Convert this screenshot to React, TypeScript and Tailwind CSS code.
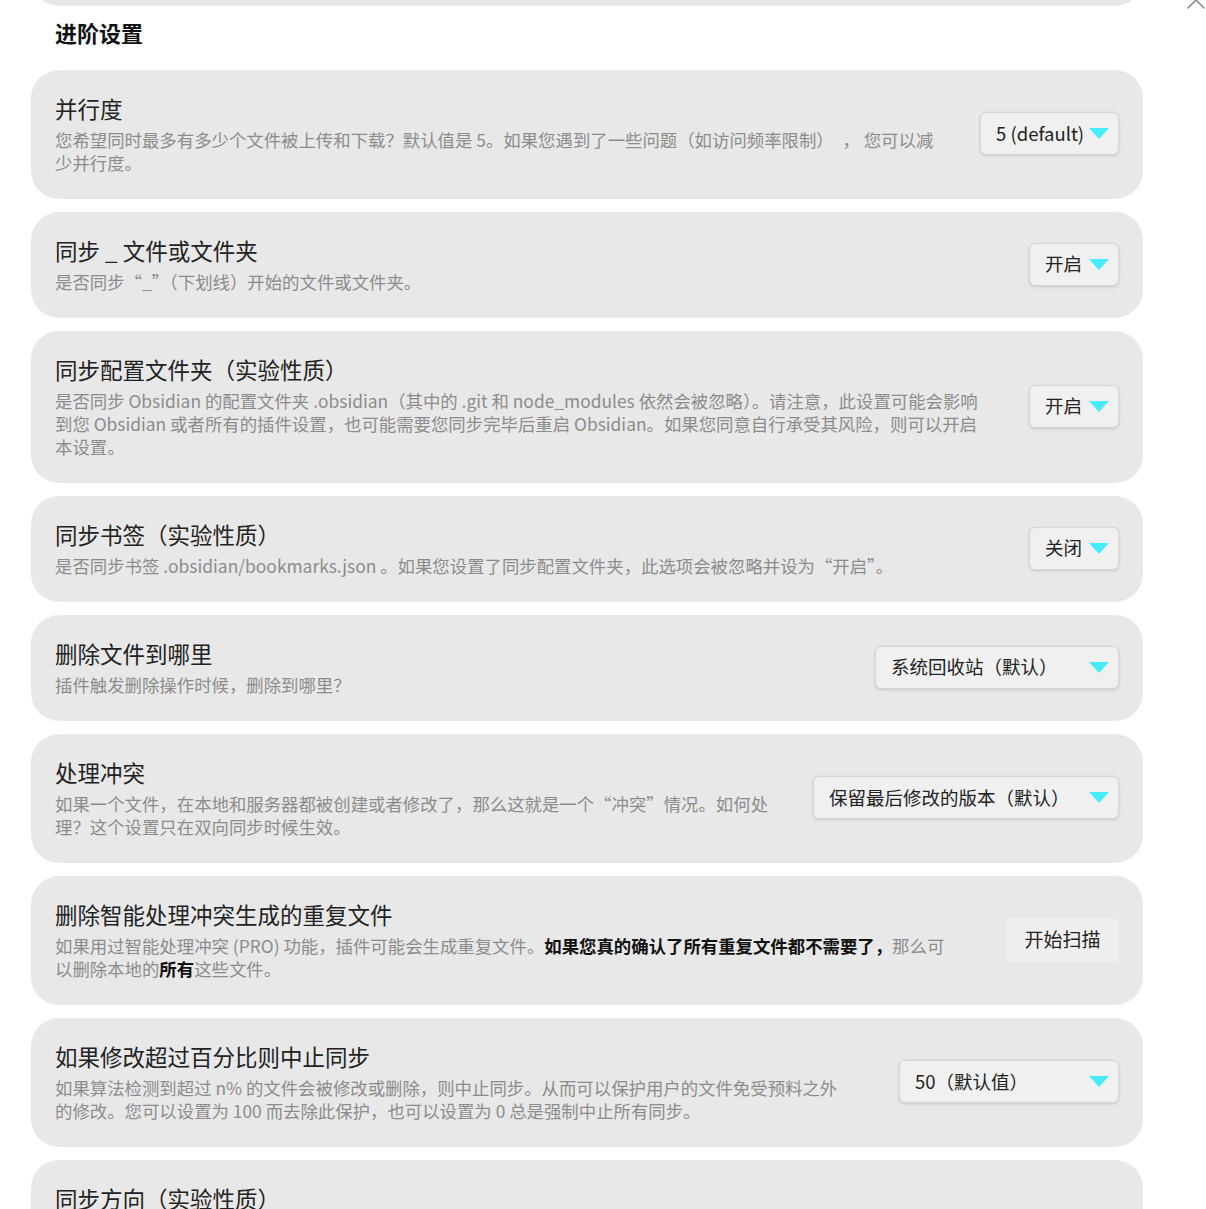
import { X } from 'lucide-react';
import type { ReactNode } from 'react';

type Control =
  | { kind: 'select'; value: string; width: string }
  | { kind: 'button'; label: string };

interface Setting {
  title: string;
  desc: ReactNode;
  control: Control;
}

const settings: Setting[] = [
  {
    title: '并行度',
    desc: (
      <>
        您希望同时最多有多少个文件被上传和下载？默认值是 5。如果您遇到了一些问题（如访问频率限制）　， 您可以减
        <br />
        少并行度。
      </>
    ),
    control: { kind: 'select', value: '5 (default)', width: 'w-[139px]' },
  },
  {
    title: '同步 _ 文件或文件夹',
    desc: '是否同步“_”（下划线）开始的文件或文件夹。',
    control: { kind: 'select', value: '开启', width: 'w-[90px]' },
  },
  {
    title: '同步配置文件夹（实验性质）',
    desc: (
      <>
        是否同步 Obsidian 的配置文件夹 .obsidian（其中的 .git 和 node_modules 依然会被忽略）。请注意，此设置可能会影响
        <br />
        到您 Obsidian 或者所有的插件设置，也可能需要您同步完毕后重启 Obsidian。如果您同意自行承受其风险，则可以开启
        <br />
        本设置。
      </>
    ),
    control: { kind: 'select', value: '开启', width: 'w-[90px]' },
  },
  {
    title: '同步书签（实验性质）',
    desc: '是否同步书签 .obsidian/bookmarks.json 。如果您设置了同步配置文件夹，此选项会被忽略并设为“开启”。',
    control: { kind: 'select', value: '关闭', width: 'w-[90px]' },
  },
  {
    title: '删除文件到哪里',
    desc: '插件触发删除操作时候，删除到哪里？',
    control: { kind: 'select', value: '系统回收站（默认）', width: 'w-[244px]' },
  },
  {
    title: '处理冲突',
    desc: (
      <>
        如果一个文件，在本地和服务器都被创建或者修改了，那么这就是一个“冲突”情况。如何处
        <br />
        理？这个设置只在双向同步时候生效。
      </>
    ),
    control: { kind: 'select', value: '保留最后修改的版本（默认）', width: 'w-[306px]' },
  },
  {
    title: '删除智能处理冲突生成的重复文件',
    desc: (
      <>
        如果用过智能处理冲突 (PRO) 功能，插件可能会生成重复文件。
        <b className="font-bold text-[#111]">如果您真的确认了所有重复文件都不需要了，</b>
        那么可
        <br />
        以删除本地的<b className="font-bold text-[#111]">所有</b>这些文件。
      </>
    ),
    control: { kind: 'button', label: '开始扫描' },
  },
  {
    title: '如果修改超过百分比则中止同步',
    desc: (
      <>
        如果算法检测到超过 n% 的文件会被修改或删除，则中止同步。从而可以保护用户的文件免受预料之外
        <br />
        的修改。您可以设置为 100 而去除此保护，也可以设置为 0 总是强制中止所有同步。
      </>
    ),
    control: { kind: 'select', value: '50（默认值）', width: 'w-[220px]' },
  },
  {
    title: '同步方向（实验性质）',
    desc: '插件应该向哪里同步？默认是双向同步，本地和远端的修改都会互相同步。如果选择增量单向同步，则只把本地新增或修改的文件推送到远端，而不会删除远端的文件；反之亦然。注意每次同步都只对修改过的文件进行操作。',
    control: { kind: 'select', value: '双向同步（默认）', width: 'w-[220px]' },
  },
];

function SelectBox({ value, width }: { value: string; width: string }) {
  return (
    <div
      className={`${width} h-[43px] shrink-0 flex items-center justify-between pl-[15px] pr-[9px] bg-[#f0f0f0] border border-[#d6d6d6] rounded-[6px] shadow-[0_1px_3px_rgba(0,0,0,0.14)] text-[18.5px] text-[#222]`}
    >
      <span className="whitespace-nowrap">{value}</span>
      <svg width="20" height="11" viewBox="0 0 20 11" className="shrink-0">
        <polygon points="0,0 20,0 10,11" fill="#48ebf9" />
      </svg>
    </div>
  );
}

function SettingCard({ s }: { s: Setting }) {
  return (
    <div className="bg-[#e8e8e8] rounded-[28px] pl-6 pr-[24px] pt-[23px] pb-[25px] flex items-center gap-6">
      <div className="flex-1 min-w-0">
        <div className="text-[22.5px] leading-[30px] text-[#222]">{s.title}</div>
        <div className="mt-[5px] text-[17.4px] leading-[23px] text-[#8c8c8c]">{s.desc}</div>
      </div>
      {s.control.kind === 'select' ? (
        <SelectBox value={s.control.value} width={s.control.width} />
      ) : (
        <button className="w-[113px] h-[44px] shrink-0 bg-[#efefef] rounded-[6px] text-[19px] text-[#222]">
          {s.control.label}
        </button>
      )}
    </div>
  );
}

export default function App() {
  return (
    <div className="relative h-[1209px] overflow-hidden bg-white font-['Noto_Sans_CJK_SC','Noto_Sans',sans-serif]">
      <X className="absolute left-[1180px] -top-[16px] w-[32px] h-[32px] text-[#8a8a8a]" strokeWidth={1.2} />

      <div className="ml-[31px] w-[1112px]">
        {/* 上一块的底边 */}
        <div className="h-[6px] overflow-hidden">
          <div className="-mt-[54px] h-[60px] rounded-[28px] bg-[#e8e8e8]" />
        </div>

        <h2 className="mt-[11px] mb-[23px] px-6 text-[22px] leading-[30px] font-bold text-[#111]">进阶设置</h2>

        <div className="flex flex-col gap-[13px]">
          {settings.map((s) => (
            <SettingCard key={s.title} s={s} />
          ))}
        </div>
      </div>
    </div>
  );
}
